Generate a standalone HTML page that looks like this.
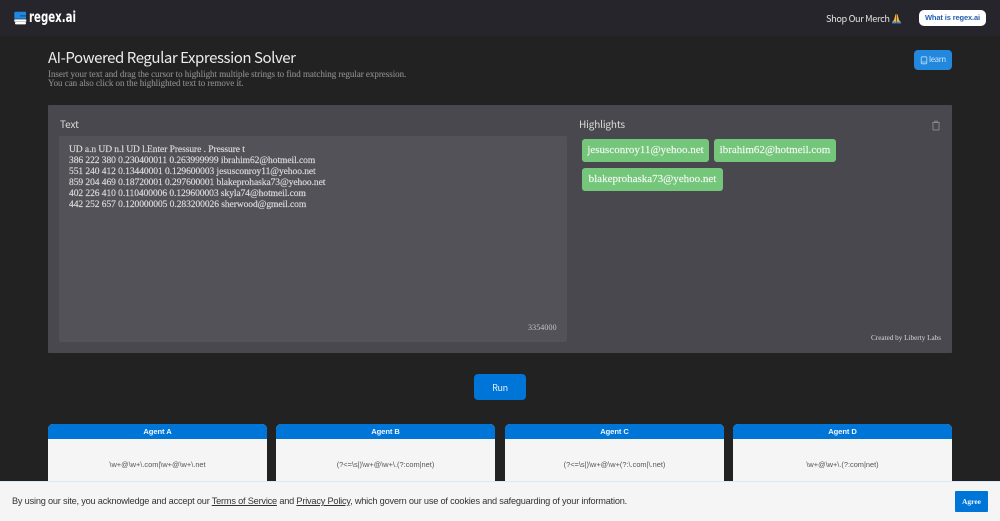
<!DOCTYPE html>
<html lang="en">
<head>
<meta charset="utf-8">
<title>regex.ai</title>
<style>
html,body{margin:0;padding:0;width:1000px;height:521px;overflow:hidden;background:#222222;}
body{position:relative;font-family:"Liberation Sans",sans-serif;}
.a{position:absolute;white-space:nowrap;}
.s{font-family:"Liberation Serif","DejaVu Serif",serif;}
.n{font-family:"Noto Sans CJK JP","Liberation Sans",sans-serif;}
.tag{position:absolute;height:23px;line-height:22px;background:#74c67a;border-radius:3px;color:#f4f8f4;font-family:"Liberation Serif",serif;font-size:11px;letter-spacing:0;text-align:center;font-weight:400;white-space:nowrap;-webkit-text-stroke:.15px #f4f8f4;}
.card{position:absolute;top:424px;height:70px;background:#f5f5f5;border-radius:5px 5px 0 0;overflow:hidden;}
.card .h{height:15px;background:#0075d8;color:#eef6ff;font-size:7.6px;letter-spacing:-.08px;font-weight:700;text-align:center;line-height:15px;}
.card .b{position:absolute;left:0;right:0;top:35px;text-align:center;font-size:7.4px;color:#555;line-height:12px;}
</style>
</head>
<body>
<div class="a" style="left:0;top:0;width:1000px;height:36px;background:#25252b;"></div>
<svg class="a" style="left:14px;top:11px" width="13" height="14" viewBox="0 0 13 14"><path d="M1.5 .7 H12 V4.6 H6 V5.2 H12 V7.8 H.3 V2 Q.3 .7 1.5 .7Z" fill="#1e88e5"/><rect x="0.3" y="8.4" width="12" height="2.4" rx=".6" fill="#fff"/><rect x="1" y="11" width="11" height="2.4" rx="1" fill="#fff"/></svg>
<div class="a" style="left:29px;top:8px;font-family:'DejaVu Sans',sans-serif;font-weight:700;font-size:15px;line-height:18px;color:#fff;transform:scaleX(.68);transform-origin:0 0;">regex.ai</div>
<div class="a n" style="left:826px;top:11px;font-size:9.2px;line-height:14px;color:#e2e2e2;letter-spacing:-.36px;">Shop Our Merch</div>
<svg class="a" style="left:891px;top:13px" width="11" height="11" viewBox="0 0 11 11"><path d="M5.2 1 L4.4 1.5 L3 7 L1 9.4 L1 10.3 L5.2 10.3Z" fill="#f5b93f"/><path d="M5.8 1 L6.6 1.5 L8 7 L10 9.4 L10 10.3 L5.8 10.3Z" fill="#f5b93f"/><path d="M1 8.6 L5.2 8.6 L5.2 10.3 L1 10.3Z M5.8 8.6 L10 8.6 L10 10.3 L5.8 10.3Z" fill="#3a8ee0"/></svg>
<div class="a" style="left:919px;top:10px;width:67px;height:16px;background:#fff;border-radius:5px;color:#2460b0;font-size:7.5px;letter-spacing:-.13px;font-weight:700;line-height:16px;text-align:center;">What is regex.ai</div>

<div class="a n" style="left:48px;top:46px;font-size:15px;line-height:24px;color:#ececec;letter-spacing:-.45px;">AI-Powered Regular Expression Solver</div>
<div class="a s" style="left:48px;top:70px;font-size:9px;line-height:8.5px;color:#8a8a8a;letter-spacing:-.03px;-webkit-text-stroke:.12px #8a8a8a;">Insert your text and drag the cursor to highlight multiple strings to find matching regular expression.<br>You can also click on the highlighted text to remove it.</div>
<div class="a" style="left:914px;top:50px;width:38px;height:20px;background:#2288dd;border-radius:4px;"></div>
<svg class="a" style="left:920px;top:56px" width="8" height="9" viewBox="0 0 8 9"><rect x="1.2" y=".8" width="5.6" height="7" rx="1" fill="none" stroke="#b9dcf7" stroke-width=".8"/><path d="M1.2 6 H6.8" stroke="#b9dcf7" stroke-width=".7"/></svg>
<div class="a n" style="left:929px;top:53px;font-size:7.6px;line-height:14px;color:#d4e9fa;letter-spacing:-.25px;">learn</div>

<div class="a" style="left:48px;top:105px;width:904px;height:248px;background:#48484e;border-radius:1px;"></div>
<div class="a n" style="left:60px;top:116px;font-size:10px;line-height:15px;color:#dedede;letter-spacing:-.1px;">Text</div>
<div class="a n" style="left:579px;top:116px;font-size:10px;line-height:15px;color:#dedede;letter-spacing:-.15px;">Highlights</div>
<div class="a" style="left:59px;top:136px;width:508px;height:206px;background:#525258;border-radius:2px;"></div>
<div class="a s" style="left:69px;top:145px;font-size:9.5px;line-height:11px;color:#d8d8d8;letter-spacing:-.06px;font-weight:400;-webkit-text-stroke:.2px #d8d8d8;">UD a.n UD n.l UD l.Enter Pressure . Pressure t<br>386 222 380 0.230400011 0.263999999 ibrahim62@hotmeil.com<br>551 240 412 0.13440001 0.129600003 jesusconroy11@yehoo.net<br>859 204 469 0.18720001 0.297600001 blakeprohaska73@yehoo.net<br>402 226 410 0.110400006 0.129600003 skyla74@hotmeil.com<br>442 252 657 0.120000005 0.283200026 sherwood@gmeil.com</div>
<div class="a s" style="left:528px;top:323px;font-size:8px;line-height:10px;color:#c4c4c4;letter-spacing:.1px;">3354000</div>
<svg class="a" style="left:931px;top:120px" width="10" height="11" viewBox="0 0 10 11"><path d="M2 3 V9.2 Q2 10 2.8 10 H7.2 Q8 10 8 9.2 V3 M1.2 2.5 H8.8 M3.6 2.3 V1.2 H6.4 V2.3" fill="none" stroke="#85858a" stroke-width="1"/></svg>
<div class="tag" style="left:582px;top:139px;width:127px;">jesusconroy11@yehoo.net</div>
<div class="tag" style="left:714px;top:139px;width:122px;">ibrahim62@hotmeil.com</div>
<div class="tag" style="left:582px;top:167.5px;width:141px;">blakeprohaska73@yehoo.net</div>
<div class="a s" style="left:871px;top:333px;font-size:7.2px;line-height:10px;color:#d8d8d8;">Created by Liberty Labs</div>

<div class="a n" style="left:474px;top:374px;width:52px;height:26px;background:#0075d8;border-radius:4px;color:#e6f2fd;font-size:9px;letter-spacing:-.3px;line-height:27px;text-align:center;">Run</div>

<div class="card" style="left:48px;width:219px;"><div class="h">Agent A</div><div class="b">\w+@\w+\.com|\w+@\w+\.net</div></div>
<div class="card" style="left:276px;width:219px;"><div class="h">Agent B</div><div class="b">(?&lt;=\s|)\w+@\w+\.(?:com|net)</div></div>
<div class="card" style="left:505px;width:219px;"><div class="h">Agent C</div><div class="b">(?&lt;=\s|)\w+@\w+(?:\.com|\.net)</div></div>
<div class="card" style="left:733px;width:219px;"><div class="h">Agent D</div><div class="b">\w+@\w+\.(?:com|net)</div></div>

<div class="a" style="left:0;top:481px;width:1000px;height:40px;background:#f5f5f5;border-top:1px solid #d6e8fa;box-sizing:border-box;"></div>
<div class="a" style="left:12px;top:494px;font-size:9.2px;line-height:14px;color:#333;letter-spacing:-.2px;">By using our site, you acknowledge and accept our <u>Terms of Service</u> and <u>Privacy Policy</u>, which govern our use of cookies and safeguarding of your information.</div>
<div class="a s" style="left:955px;top:491px;width:33px;height:21px;background:#0075d8;border-radius:1px;color:#eaf4fd;font-size:7.5px;font-weight:700;line-height:21px;text-align:center;">Agree</div>
</body>
</html>
